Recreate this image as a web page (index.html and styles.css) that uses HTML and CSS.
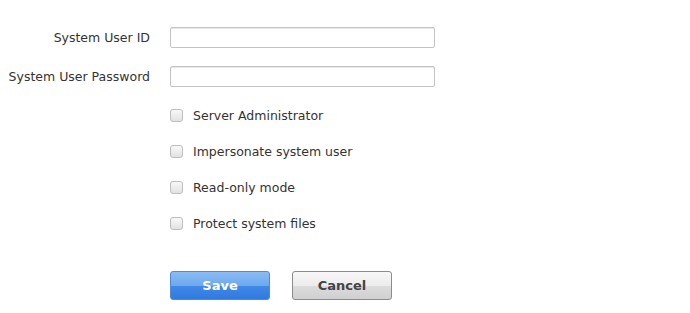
FILE: index.html
```html
<html>
	<head>
<link rel="stylesheet" href="styles.css">
	</head>
	<body>
		<form class="user-form">
			<div class="field">
				<label class="field-label" for="uid">System User ID</label>
				<input class="text-input" type="text" id="uid">
			</div>
			<div class="field">
				<label class="field-label" for="upw">System User Password</label>
				<input class="text-input" type="password" id="upw">
			</div>

			<div class="options">
				<label class="check"><input type="checkbox"> Server Administrator</label>
				<label class="check"><input type="checkbox"> Impersonate system user</label>
				<label class="check"><input type="checkbox"> Read-only mode</label>
				<label class="check"><input type="checkbox"> Protect system files</label>
			</div>

			<div class="actions">
				<button type="button" class="btn btn-save">Save</button>
				<button type="button" class="btn btn-cancel">Cancel</button>
			</div>
		</form>
	</body>
</html>
```

FILE: styles.css
```css
body {
    margin: 0;
    background: #ffffff;
    font-family: "DejaVu Sans", Verdana, sans-serif;
    font-size: 12.5px;
    color: #333333;
}

.user-form {
    padding-top: 27px;
}

.field {
    display: grid;
    grid-template-columns: 150px 265px;
    column-gap: 20px;
    align-items: center;
    margin-bottom: 18px;
}

.field-label {
    text-align: right;
}

.text-input {
    height: 21px;
    margin: 0;
    padding: 0 4px;
    border: 1px solid #c4c4c4;
    border-radius: 2px;
    box-shadow: inset 0 1px 1px #e6e6e6;
    font: inherit;
}

.options {
    display: flex;
    flex-direction: column;
    gap: 16px;
    padding-left: 170px;
}

.check {
    display: flex;
    align-items: center;
    gap: 10px;
    height: 20px;
}

.check input {
    appearance: none;
    -webkit-appearance: none;
    width: 13px;
    height: 13px;
    margin: 0;
    border: 1px solid #bdbdbd;
    border-radius: 3px;
    background: linear-gradient(#f8f8f8, #e2e2e2);
}

.actions {
    display: flex;
    gap: 22px;
    padding-left: 170px;
    margin-top: 38px;
}

.btn {
    width: 100px;
    height: 29px;
    border-radius: 3px;
    font-family: "DejaVu Sans", Tahoma, sans-serif;
    font-size: 13px;
    font-weight: bold;
}

.btn-save {
    color: #ffffff;
    border: 1px solid #4f8ad8;
    background: linear-gradient(#8abcf3 0%, #6ea9ef 50%, #4189e7 52%, #2f7ae0 100%);
}

.btn-cancel {
    color: #444444;
    border: 1px solid #8c8c8c;
    background: linear-gradient(#f7f7f7 0%, #ececec 50%, #dcdcdc 52%, #d0d0d0 100%);
}
```
